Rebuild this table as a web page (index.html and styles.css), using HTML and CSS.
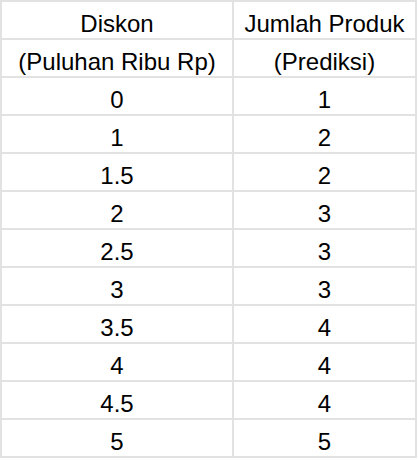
FILE: index.html
```html
<!DOCTYPE html>
<html>
<head>
<meta charset="utf-8">
<link rel="stylesheet" href="styles.css">
</head>
<body>
<div class="sheet">
  <div class="cell">Diskon</div><div class="cell">Jumlah Produk</div>
  <div class="cell">(Puluhan Ribu Rp)</div><div class="cell">(Prediksi)</div>
  <div class="cell">0</div><div class="cell">1</div>
  <div class="cell">1</div><div class="cell">2</div>
  <div class="cell">1.5</div><div class="cell">2</div>
  <div class="cell">2</div><div class="cell">3</div>
  <div class="cell">2.5</div><div class="cell">3</div>
  <div class="cell">3</div><div class="cell">3</div>
  <div class="cell">3.5</div><div class="cell">4</div>
  <div class="cell">4</div><div class="cell">4</div>
  <div class="cell">4.5</div><div class="cell">4</div>
  <div class="cell">5</div><div class="cell">5</div>
</div>
</body>
</html>
```
FILE: styles.css
```css
html, body {
  margin: 0;
  padding: 0;
  background: #ffffff;
}
.sheet {
  display: grid;
  grid-template-columns: 230px 181px;
  grid-auto-rows: 36px;
  gap: 2px;
  padding: 2px;
  width: max-content;
  background: #e2e2e2;
  font-family: "Liberation Sans", Arial, sans-serif;
  font-size: 24px;
  color: #000;
}
.cell {
  background: #fff;
  display: flex;
  align-items: flex-end;
  justify-content: center;
  padding-bottom: 1px;
  line-height: 27px;
  white-space: nowrap;
}
```
